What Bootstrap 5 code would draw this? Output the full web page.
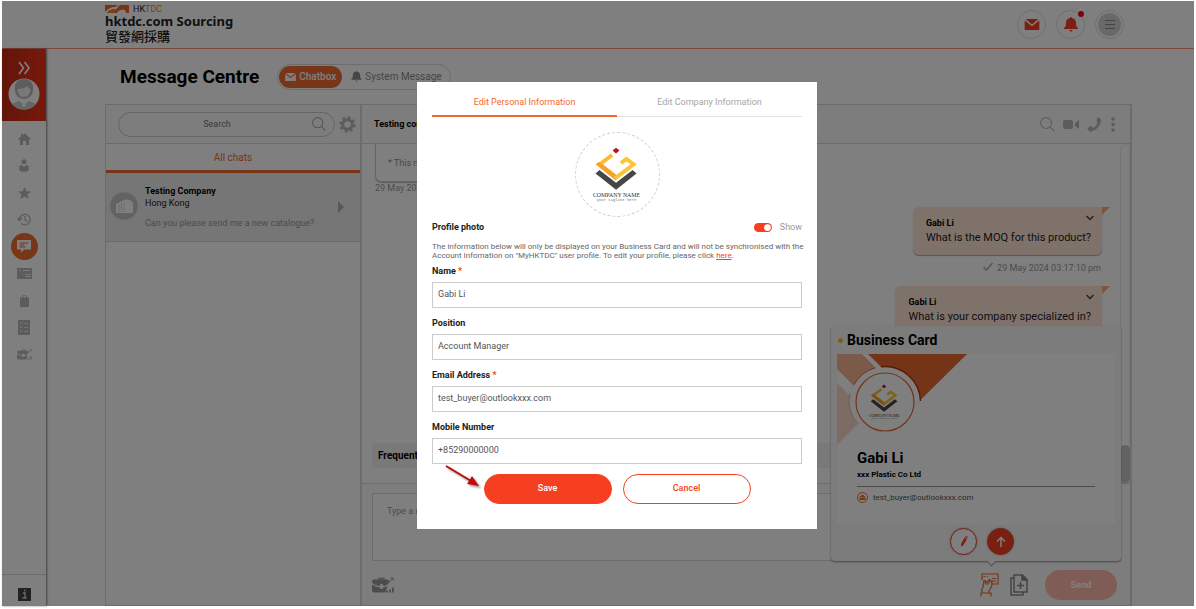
<!DOCTYPE html>
<html lang="en">
<head>
<meta charset="utf-8">
<meta name="viewport" content="width=device-width, initial-scale=1">
<title>Message Centre</title>
<link href="https://cdn.jsdelivr.net/npm/bootstrap@5.3.0/dist/css/bootstrap.min.css" rel="stylesheet">
<style>
  :root { --orange: #f06a2e; --red: #f63f20; --line: #d8d8d8; --icon: #b9b9b9; }
  body { font-family: Roboto, "Liberation Sans", sans-serif; font-size: 9px; line-height: 12px; color: #222; background: #fff; padding: 1px 2px 3px; min-height: 100vh; display: flex; }
  svg { display: block; flex: none; }
  button { font-family: inherit; }
  .plain-btn { border: 0; background: none; padding: 0; color: var(--icon); }
  .shell { min-width: 0; }
  .topbar { height: 48px; border-bottom: 1px solid #ff8a75; padding: 4px 70px 0 103px; }
  .brand { color: #222; text-decoration: none; }
  .brand-mini { font: 9px/8px Roboto, sans-serif; color: #f58220; }
  .brand-name { font: bold 13px/16px "Noto Sans", sans-serif; }
  .brand-cjk { font: 500 13px/13px "Noto Sans CJK TC", sans-serif; }
  .top-actions { gap: 10px; padding-top: 5px; }
  .round-btn { width: 29px; height: 29px; border-radius: 50%; border: 1px solid #dedede; background: #fff; padding: 0; display: grid; place-items: center; color: var(--red); }
  .alert-dot { width: 6px; height: 6px; border-radius: 50%; background: #ff0020; top: 0; right: 0; }
  .menu-disc { width: 23px; height: 23px; border-radius: 50%; background: #d2d2d2; display: grid; place-items: center; }
  .sidebar { width: 44px; flex: none; box-shadow: 1px 0 2px rgba(0,0,0,.5); }
  .side-head { height: 72px; background: linear-gradient(90deg,#c42a12,#f0341a); padding-top: 12px; }
  .side-nav a { width: 27px; height: 27px; display: grid; place-items: center; color: var(--icon); border-radius: 50%; }
  .side-nav a.current { background: var(--orange); color: #fff; }
  .side-foot { height: 32px; border-top: 1px solid var(--line); }
  .workspace { padding: 0 62px 0 59px; min-width: 0; }
  .title-row { height: 55px; padding-left: 15px; gap: 18px; }
  .title-row h1 { font-size: 19px; line-height: 24px; font-weight: 700; color: #000; margin: 0; }
  .switcher { border: 1px solid var(--line); border-radius: 14px; padding: 1px; height: 26px; font-size: 10px; line-height: 22px; }
  .switcher button { border-radius: 11px; height: 22px; color: #8c8c8c; padding: 0 7px 0 9px; display: flex; align-items: center; gap: 3px; }
  .switcher button.active { background: var(--orange); color: #fff; padding: 0 6px; font-weight: 500; }
  .panel { border: 1px solid var(--line); border-width: 1px 2px 1px 1px; min-height: 0; }
  .chat-list { border-right: 2px solid var(--line); }
  .bar { height: 39px; border-bottom: 1px solid var(--line); background: #fbfbfb; }
  .head-icons { gap: 8px; padding-right: 14px; }
  .search-pill { border: 1px solid #c8c8c8; border-radius: 13px; height: 25px; }
  .search-pill input { border: 0; background: none; font-size: 9px; text-align: center; min-width: 0; outline: 0; color: #666; padding: 0 0 0 3px; }
  .search-pill input::placeholder { color: #777; }
  .all-tab { height: 29px; font-size: 10px; padding-top: 1px; color: var(--orange); border-bottom: 3px solid var(--orange); }
  .chat-item { background: #ececec; border-bottom: 1px solid #d4d4d4; height: 69px; padding: 12px 16px 0 5px; }
  .co-disc { width: 26px; height: 26px; border-radius: 50%; background: #c4c4c4; box-shadow: 0 0 2px #999; display: grid; place-items: center; }
  .muted { color: #999; }
  .messages { min-height: 0; overflow: hidden; padding: 0 28px 0 13px; }
  .scroll-track { width: 10px; border: 1px solid #ececec; border-radius: 5px 5px 0 0; padding-top: 300px; top: 0; right: 0; bottom: 0; }
  .scroll-thumb { height: 38px; border-radius: 5px; background: #c4c4c4; margin: 0 -1px; }
  .sys-bubble { height: 38px; width: 180px; border: 1px solid #ccc; border-top: 0; border-radius: 0 0 6px 6px; padding: 13px 12px 0; color: #8c8c8c; box-shadow: 0 1px 1px #bbb; }
  .sent { padding-top: 13px; }
  .bubble { background: #ffe4d4; border-radius: 6px 0 6px 6px; padding: 9px 11px 9px 13px; box-shadow: 0 1px 1px #aaa; height: 48px; font-size: 11px; line-height: 16px; position: relative; }
  .bubble strong { font-size: 9px; line-height: 14px; display: block; color: #000; }
  .bubble::after { content: ""; position: absolute; left: 100%; top: 0; border-top: 8px solid #f5ae85; border-right: 8px solid transparent; }
  .bubble svg { position: absolute; right: 8px; top: 8px; }
  .stamp { gap: 4px; padding: 7px 1px 12px 0; }
  .faq { background: #f2f2f2; border-radius: 3px; height: 25px; font-size: 10px; line-height: 25px; padding-left: 6px; margin: 0 10px 15px; color: #000; }
  .composer { border-top: 1px solid var(--line); background: #fafafa; padding: 9px 9px 0 10px; position: relative; }
  .composer textarea { height: 68px; border: 1px solid var(--line); background: #fff; resize: none; font-size: 9px; line-height: 12px; padding: 11px 14px; display: block; outline: 0; }
  .composer textarea::placeholder { color: #999; }
  .tools { height: 44px; padding: 3px 4px 0 0; gap: 11px; }
  .send { width: 72px; height: 30px; border-radius: 15px; border: 0; background: #ffb8ab; color: #fff; font-size: 9px; font-weight: 700; margin-left: 6px; }
  .card-pop { position: absolute; right: 9px; bottom: 44px; width: 290px; background: #f8f8f8; border-radius: 4px; box-shadow: 0 1px 2px #888; padding: 7px 6px 6px; }
  .card-pop::after { content: ""; position: absolute; right: 126px; bottom: -4px; width: 7px; height: 7px; background: #f8f8f8; border: solid #aaa; border-width: 0 1px 1px 0; transform: rotate(45deg); }
  .card-pop h2 { font-size: 14px; line-height: 15px; font-weight: 700; margin: 0 0 6px; color: #000; gap: 4px; padding-left: 1px; }
  .dot { width: 5px; height: 5px; border-radius: 50%; background: #fdbb2d; }
  .biz { background: #fff; height: 170px; padding: 0 20px; }
  .biz-art { margin: 0 0 1px -20px; }
  .biz h3 { font-size: 15px; line-height: 20px; margin: 0; font-weight: 700; color: #000; }
  .biz-co { font-size: 8px; line-height: 14px; font-weight: 700; color: #000; padding-bottom: 4px; border-bottom: 1px solid #999; }
  .biz-mail { font-size: 8px; gap: 5px; padding-top: 5px; color: #555; }
  .card-actions { gap: 10px; padding: 4px 0 0 12px; }
  .act { width: 27px; height: 27px; border-radius: 50%; border: 1px solid var(--red); background: #fff; padding: 0; display: grid; place-items: center; box-shadow: 0 0 2px #aaa; }
  .act.fill { background: var(--red); color: #fff; }
  .veil { position: absolute; inset: 0; background: rgba(0,0,0,.5); z-index: 10; padding: 81px 65px 0 103px; }
  .dialog { width: 400px; max-width: 100%; margin: 0 auto; background: #fff; padding: 0 15px 25px; }
  .dialog-tabs { height: 35px; border-bottom: 1px solid #e2e2e2; margin-bottom: 15px; }
  .dialog-tabs button { height: 35px; padding-top: 7px; color: #a6a6a6; border-bottom: 2px solid transparent; }
  .dialog-tabs button.active { color: var(--orange); border-color: var(--orange); }
  .photo { width: 85px; height: 85px; border: 1px dashed #ccc; border-radius: 50%; margin: 0 auto; }
  .photo-row { height: 20px; }
  .dialog .form-check-input { width: 18px; height: 9px; margin: 0; border: 0; background-color: var(--red); background-size: 9px; --bs-form-switch-bg: url("data:image/svg+xml,%3csvg xmlns='http://www.w3.org/2000/svg' viewBox='-4 -4 8 8'%3e%3ccircle r='3.4' fill='%23fff'/%3e%3c/svg%3e"); float: none; }
  .note { font-size: 8px; line-height: 9px; color: #666; margin: 5px -8px 0 0; }
  .note a { color: var(--red); }
  .field label { height: 22px; line-height: 22px; font-weight: 700; display: block; }
  .field + .field { margin-top: 4px; }
  .field i { color: var(--red); font-style: normal; }
  .field .form-control { height: 26px; border: 1px solid #ccc; border-radius: 0; font-size: 9px; line-height: 12px; padding: 0 5px 2px; color: #555; }
  .choices { margin-top: 10px; gap: 11px; }
  .choices button { width: 128px; height: 30px; border-radius: 15px; border: 1px solid var(--red); font-size: 9px; font-weight: 500; padding-bottom: 3px; }
  .save { background: var(--red); color: #fff; }
  .cancel { background: #fff; color: var(--red); }
  .pointer { position: absolute; left: 10px; top: -11px; filter: drop-shadow(2px 2px 1px #999); }
</style>
</head>
<body>
<svg width="0" height="0" class="position-absolute" aria-hidden="true">
  <symbol id="mail" viewBox="0 0 16 12"><path d="M0 1.500V12h16V1.500L8 8z" fill="currentColor"/><path d="M1 0h14L8 6z" fill="currentColor"/></symbol>
  <symbol id="bell" viewBox="0 0 14 15"><path d="M6 1a1 1 0 0 1 2 0c3 .6 4 2.500 4 5 0 3 .5 4 2 5v1H0v-1c1.500-1 2-2 2-5 0-2.500 1-4.400 4-5zM5.500 13h3a1.500 1.500 0 0 1-3 0z" fill="currentColor"/></symbol>
  <symbol id="lens" viewBox="0 0 16 16"><circle cx="6.500" cy="6.500" r="5.800" fill="none" stroke="currentColor" stroke-width="1.200"/><path d="M10.500 10.500L15.300 15.300" stroke="currentColor" stroke-width="1.200"/></symbol>
  <symbol id="briefcase" viewBox="0 0 22 16"><path d="M7 3V1.500h5V3" fill="none" stroke="currentColor" stroke-width="1.300"/><path d="M2 2.500h14a2 2 0 0 1 1 2L16 7l-3 2h-1.500a2 2 0 0 0-4 0H6L1.500 7 0 5a2 2 0 0 1 2-2.500zM0 7.500L5 10h2.500a2 2 0 0 0 4 0H14l2-1-3 6.500H2a2 2 0 0 1-2-2zM14 15.500v-2h1.800v2zM17 15.500v-3h1.800v3zM20 15.500v-5h1.800v5z" fill="currentColor"/><path d="M16.500 6L21 1M18.500 1H21v2.500" fill="none" stroke="currentColor"/></symbol>
</svg>

<div class="shell flex-grow-1 d-flex flex-column position-relative">
  <header class="topbar d-flex justify-content-between">
    <a href="#" class="brand">
      <div class="brand-mini d-flex">
        <svg width="24" height="8" viewBox="0 0 24 8"><path d="M0 0h13l-3 2C6 2 2 4 0 7zM15 0h9v8H9c2-4 4-6 6-8z" fill="#f0642c"/><path d="M1 8c3-4 7-5 11-4L9 8z" fill="#f58220"/><path d="M1 7.500c3-3.500 7-4.500 10-3.500" stroke="#fff" fill="none"/><path d="M12 8c1-3 5-4 8-3l1 3z" fill="#fff"/></svg>
        <span class="ms-1"><span class="text-dark">HK</span>TDC</span>
      </div>
      <div class="brand-name">hktdc.com Sourcing</div>
      <div class="brand-cjk" lang="zh-Hant">貿發網採購</div>
    </a>
    <div class="top-actions d-flex">
      <button class="round-btn" aria-label="Messages"><svg width="16" height="11"><use href="#mail"/></svg></button>
      <button class="round-btn position-relative" aria-label="Notifications"><svg width="14" height="15"><use href="#bell"/></svg><span class="alert-dot position-absolute"></span></button>
      <button class="round-btn" aria-label="Menu"><span class="menu-disc"><svg width="10" height="9" viewBox="0 0 10 9"><path d="M0 .5h10M0 4.500h10M0 8.500h10" stroke="#888"/></svg></span></button>
    </div>
  </header>

  <div class="d-flex flex-grow-1">
    <aside class="sidebar d-flex flex-column">
      <div class="side-head d-flex flex-column align-items-center">
        <button class="plain-btn text-white" aria-label="Expand"><svg width="12" height="14" viewBox="0 0 12 14"><path d="M1 1l4.500 6L1 13M6.500 1L11 7l-4.500 6" fill="none" stroke="currentColor" stroke-width="1.600"/></svg></button>
        <svg width="32" height="36" viewBox="0 -3 32 36"><circle cx="16" cy="16" r="15.500" fill="#fff"/><path d="M4 26l7-3 5 4 5-4 7 3c-3 4-7 5.500-12 5.500S7 30 4 26z" fill="#ccc"/><path d="M16 22.500v6" stroke="#fff" stroke-width="3"/><path d="M7 12C6 5 10 1 16 1s10 4 9 11c0 5-4 9-9 9s-9-4-9-9z" fill="#bbb"/><path d="M9.500 11c4 0 8-1 10-3 1 2 2 3 3 3 0 5-2.500 8-6.500 8s-6.500-3-6.500-8z" fill="#f2f2f2"/></svg>
      </div>
      <nav class="side-nav d-flex flex-column align-items-center pt-1" aria-label="Main">
        <a href="#" aria-label="Home"><svg width="13" height="12" viewBox="0 0 13 12" fill="currentColor"><path d="M6.500 0L13 6l-1 1-1-.7V12H8V8H5v4H2V6.300L1 7 0 6l3-2.700V1h2v1z"/></svg></a>
        <a href="#" aria-label="Account"><svg width="10" height="13" viewBox="0 0 10 13" fill="currentColor"><circle cx="5" cy="2.700" r="2.500"/><path d="M0 10c0-3 1-4 3-4l2 2 2-2c2 0 3 1 3 4 0 4-10 4-10 0z"/></svg></a>
        <a href="#" aria-label="Favourites"><svg width="13" height="12" viewBox="0 0 13 12" fill="currentColor"><path d="M6.500 0l2 4.200 4.500.4-3.500 3 1.200 4.400-4.200-2.500L2.300 12l1.200-4.400L0 4.600l4.500-.4z"/></svg></a>
        <a href="#" aria-label="History"><svg width="14" height="13" viewBox="0 0 14 13" fill="none" stroke="currentColor" stroke-width="1.300"><path d="M2.500 6.500a5.300 5.300 0 1 1 1.600 3.900M0 5l2.500 2.500L5 5M8 3v4l2.500 1.500"/></svg></a>
        <a href="#" class="current" aria-label="Messages"><svg width="14" height="13" viewBox="0 0 14 13"><path d="M0 0h14v9.500H7L4 13V9.500H0z" fill="currentColor"/><path d="M2.500 3h9M2.500 5h5M2.500 7h6" stroke="#f06a2e" stroke-width="1.200"/></svg></a>
        <a href="#" aria-label="Cards"><svg width="15" height="11" viewBox="0 0 15 11"><path d="M0 0h15v11H0z" fill="currentColor"/><path d="M2 2.500h2M6 2.500h7M8 6.500h6M8 8.500h6" stroke="#f2f2f2"/></svg></a>
        <a href="#" aria-label="Orders"><svg width="9" height="12" viewBox="0 0 9 12"><path d="M0 2.500h9V12H0z" fill="currentColor"/><path d="M2.500 4V2a2 2 0 0 1 4 0v2" fill="none" stroke="currentColor"/></svg></a>
        <a href="#" aria-label="Lists"><svg width="12" height="15" viewBox="0 0 12 15"><path d="M0 0h12v15H0z" fill="currentColor"/><path d="M2 3l1 1 1-2M6 3.500h4M2 7l1 1 1-2M6 7.500h4M2 11l1 1 1-2M6 11.500h4" fill="none" stroke="#f2f2f2" stroke-width=".8"/></svg></a>
        <a href="#" aria-label="Business tools"><svg width="15" height="11"><use href="#briefcase"/></svg></a>
      </nav>
      <div class="side-foot mt-auto d-flex justify-content-center align-items-center pt-2">
        <svg width="13" height="13" viewBox="0 0 13 13"><path d="M0 0h13v13H0z" fill="#444"/><path d="M5 5h2v5M4.500 10h4M6 2.500h1.500" stroke="#ddd" fill="none" stroke-width="1.300"/></svg>
      </div>
    </aside>

    <main class="workspace flex-grow-1 d-flex flex-column">
      <div class="title-row d-flex align-items-center">
        <h1>Message Centre</h1>
        <div class="switcher d-flex">
          <button class="plain-btn active"><svg width="11" height="8"><use href="#mail"/></svg>Chatbox</button>
          <button class="plain-btn"><svg width="11" height="11"><use href="#bell"/></svg>System Message</button>
        </div>
      </div>

      <div class="panel d-flex flex-grow-1">
        <section class="chat-list col-3">
          <div class="bar d-flex align-items-center ps-2">
            <div class="search-pill d-flex align-items-center flex-grow-1 ms-1 pe-1">
              <input class="flex-grow-1" type="text" placeholder="Search" aria-label="Search chats">
              <svg class="me-1" width="14" height="14" style="color:#aaa"><use href="#lens"/></svg>
            </div>
            <button class="plain-btn mx-1" aria-label="Settings"><svg width="17" height="17" viewBox="-8.500 -8.500 17 17"><circle r="4.800" fill="none" stroke="currentColor" stroke-width="3"/><circle r="7" fill="none" stroke="currentColor" stroke-width="2.400" stroke-dasharray="2.750 2.750"/></svg></button>
          </div>
          <button class="plain-btn all-tab w-100">All chats</button>
          <div class="chat-item d-flex gap-2">
            <span class="co-disc flex-shrink-0 mt-2"><svg width="17" height="14" viewBox="0 0 17 14"><path d="M0 14V5l6-3c5-3 9-1 11 2v10z" fill="#fff"/><path d="M3 6v8M5.500 5v8M8 4v9" stroke="#c4c4c4" stroke-dasharray="1.500 1"/></svg></span>
            <div class="flex-grow-1">
              <strong class="d-block text-black">Testing Company</strong>
              <div>Hong Kong</div>
              <div class="muted pt-2">Can you please send me a new catalogue?</div>
            </div>
            <svg class="mt-3" width="6" height="12" viewBox="0 0 6 12"><path d="M0 0l6 6-6 6z" fill="#b0b0b0"/></svg>
          </div>
        </section>

        <section class="flex-grow-1 d-flex flex-column">
          <div class="bar d-flex align-items-center justify-content-between ps-2">
            <strong class="text-black ms-1">Testing company</strong>
            <div class="head-icons d-flex align-items-center">
              <button class="plain-btn" aria-label="Search messages"><svg width="15" height="15"><use href="#lens"/></svg></button>
              <button class="plain-btn" aria-label="Video call"><svg width="16" height="9" viewBox="0 0 16 9" fill="currentColor"><rect width="10" height="9" rx="2"/><path d="M16 0v9l-4-3V3z"/></svg></button>
              <button class="plain-btn" aria-label="Call"><svg width="15" height="15" viewBox="0 0 15 15"><path d="M2 12c5 3 12-5 9-9" fill="none" stroke="currentColor" stroke-width="2.800"/><path d="M11 0l3 2.500v3L11 6 9.500 3zM0 11l4-2 2 1.500-1 3.500-2 1z" fill="currentColor"/></svg></button>
              <button class="plain-btn" aria-label="More"><svg width="6" height="15" viewBox="-1 0 6 15" fill="currentColor"><circle cx="2" cy="2" r="1.800"/><circle cx="2" cy="7.500" r="1.800"/><circle cx="2" cy="13" r="1.800"/></svg></button>
            </div>
          </div>
          <div class="flex-grow-1 position-relative d-flex flex-column">
            <div class="messages flex-grow-1">
              <div class="sys-bubble">* This message is automated</div>
              <div class="muted">29 May 2024</div>
              <div class="sent d-flex flex-column align-items-end">
                <div class="bubble"><strong>Gabi Li</strong>What is the MOQ for this product?<svg width="8" height="6" viewBox="0 0 8 6"><path d="M.5 1L4 4.500 7.500 1" fill="none" stroke="#444" stroke-width="1.500"/></svg></div>
                <div class="stamp muted d-flex"><svg width="10" height="9" viewBox="0 0 10 9"><path d="M.5 5L3.500 8l6-7" fill="none" stroke="#aaa" stroke-width="1.500"/></svg>29 May 2024 03:17:10 pm</div>
                <div class="bubble"><strong>Gabi Li</strong>What is your company specialized in?<svg width="8" height="6" viewBox="0 0 8 6"><path d="M.5 1L4 4.500 7.500 1" fill="none" stroke="#444" stroke-width="1.500"/></svg></div>
              </div>
            </div>
            <strong class="faq">Frequently Asked Questions</strong>
            <div class="scroll-track position-absolute"><div class="scroll-thumb"></div></div>
          </div>
          <div class="composer">
            <textarea class="w-100" placeholder="Type a message" aria-label="Message"></textarea>
            <div class="tools d-flex align-items-center">
              <button class="plain-btn me-auto" aria-label="Business tools" style="color:#999"><svg width="22" height="16"><use href="#briefcase"/></svg></button>
              <button class="plain-btn" aria-label="Business card" style="color:var(--orange)"><svg width="19" height="24" viewBox="0 0 19 24" fill="none" stroke="currentColor" stroke-width="1.200"><path d="M2 7V1h16v10h-6M12 5.500h4M10 8h6M3.500 3.500h2M7 3.500h1M10 6L5.500 10.500V8l-1.500-.5L3 14l-1.500 3 1 3h6l1-3 2-3 .5-5-1.500-1.500L7 12M1 23.500V20h10v3.500"/></svg></button>
              <button class="plain-btn" aria-label="Add file" style="color:#888"><svg width="18" height="22" viewBox="0 0 18 22" fill="none" stroke="currentColor" stroke-width="1.500"><path d="M4 1h8.500L17 5.500V18H4zM4 4H1v17h12v-3M10.500 8v7M7 11.500h7"/><path d="M12 1v5h5z" fill="currentColor"/></svg></button>
              <button class="send ">Send</button>
            </div>
            <div class="card-pop">
              <h2 class="d-flex align-items-center"><span class="dot"></span>Business Card</h2>
              <div class="biz">
                <svg class="biz-art" width="135" height="93" viewBox="0 0 135 93">
                  <path d="M31 0h99L80.500 49z" fill="#e8692f"/><path d="M0 0h25l23 23-24 16L0 15z" fill="#f7b594"/><path d="M0 29l31 31L0 91z" fill="#fbd9ca"/>
                  <circle cx="48" cy="48" r="35.500" fill="#fff"/>
                  <path d="M38 13.900A35.500 35.500 0 0 0 17 30.500" fill="none" stroke="#d66a4a"/><path d="M44 12.800A35.500 35.500 0 0 1 83.500 47" fill="none" stroke="#b83214" stroke-width="1.500"/><path d="M13 39A35.500 35.500 0 0 0 21 70" fill="none" stroke="#f0b29c"/>
                  <circle cx="48" cy="48" r="29" fill="#fff" stroke="#e8692f" stroke-width="1.200"/>
                  <use href="#company-logo" transform="translate(21 21) scale(.635)"/>
                </svg>
                <h3>Gabi Li</h3>
                <div class="biz-co">xxx Plastic Co Ltd</div>
                <div class="biz-mail d-flex"><svg width="11" height="11" viewBox="0 0 11 11"><circle cx="5.500" cy="5.500" r="5" fill="none" stroke="#e8692f"/><path d="M2.500 5l3-2.500 3 2.500v3h-6z" fill="#e8692f"/><path d="M3 5.500h5" stroke="#fff" stroke-width=".6"/></svg>test_buyer@outlookxxx.com</div>
              </div>
              <div class="card-actions d-flex justify-content-center">
                <button class="act" aria-label="Edit card"><svg width="8" height="11" viewBox="0 0 8 11"><path d="M4.500 1.500L7 2.700 3.500 9 1 10.800 1.200 7.800z" fill="#f63f20"/><path d="M5 .7L5.700 0 8 1l-.5 1z" fill="#f63f20"/></svg></button>
                <button class="act fill" aria-label="Send card"><svg width="10" height="11" viewBox="0 0 10 11"><path d="M5 11V1.500M1 5.500l4-4 4 4" fill="none" stroke="#fff" stroke-width="1.500"/></svg></button>
              </div>
            </div>
          </div>
        </section>
      </div>
    </main>
  </div>

  <div class="veil">
    <div class="dialog" role="dialog" aria-label="Edit business card">
      <div class="dialog-tabs d-flex">
        <button class="plain-btn active w-50">Edit Personal Information</button>
        <button class="plain-btn w-50">Edit Company Information</button>
      </div>
      <div class="photo">
        <svg width="83" height="83" viewBox="0 0 85 85">
          <g id="company-logo">
            <path d="M41 15l3.500 3-3.500 3-3.500-3z" fill="#b5121f"/>
            <path d="M37 22.500L24.500 32 41 45" fill="none" stroke="#fabb2e" stroke-width="4"/>
            <path d="M20 32l3.500-2.500L41 43v6z" fill="#f7a02c"/>
            <path d="M40 46.500L59 32 51.500 26.500 46 31" fill="none" stroke="#fac536" stroke-width="4"/>
            <path d="M24 38L41 51 58 38l4 3.500L41 58 20 41.500z" fill="#464646"/>
            <text x="41.500" y="65.500" font-family="Liberation Serif, serif" font-size="6" fill="#333" text-anchor="middle">COMPANY NAME</text>
            <text x="41.500" y="70" font-family="Liberation Mono, monospace" font-size="4" fill="#777" text-anchor="middle">your tagline here</text>
          </g>
        </svg>
      </div>
      <div class="photo-row d-flex align-items-center justify-content-between">
        <strong>Profile photo</strong>
        <div class="form-switch d-flex align-items-center gap-2 p-0"><input class="form-check-input" type="checkbox" role="switch" id="show" checked><label for="show" class="muted">Show</label></div>
      </div>
      <p class="note">The information below will only be displayed on your Business Card and will not be synchronised with the Account Infomation on "MyHKTDC" user profile. To edit your profile, please click <a href="#">here</a>.</p>
      <div class="field"><label for="fn">Name <i>*</i></label><input class="form-control" id="fn" value="Gabi Li"></div>
      <div class="field"><label for="fp">Position</label><input class="form-control" id="fp" value="Account Manager"></div>
      <div class="field"><label for="fe">Email Address <i>*</i></label><input class="form-control" id="fe" type="email" value="test_buyer@outlookxxx.com"></div>
      <div class="field"><label for="fm">Mobile Number</label><input class="form-control" id="fm" type="tel" value="+85290000000"></div>
      <div class="choices d-flex justify-content-center position-relative">
        <svg class="pointer" width="42" height="32" viewBox="0 0 42 32"><path d="M4 3l25 15" stroke="#c00a0a" stroke-width="2"/><path d="M37 23L25 21l5-8z" fill="#c00a0a"/></svg>
        <button class="save">Save</button><button class="cancel">Cancel</button>
      </div>
    </div>
  </div>
</div>
<script src="https://cdn.jsdelivr.net/npm/bootstrap@5.3.0/dist/js/bootstrap.bundle.min.js"></script>
</body>
</html>
